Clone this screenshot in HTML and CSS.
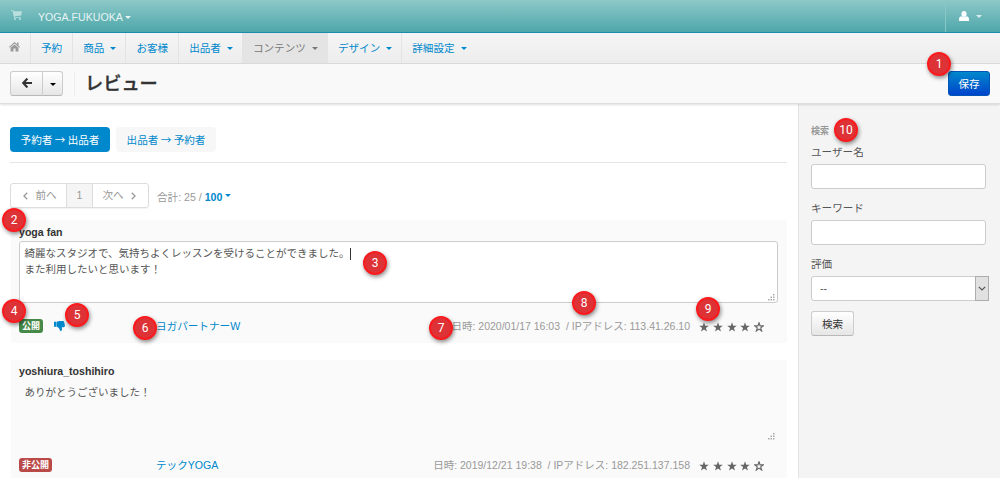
FILE: index.html
```html
<!DOCTYPE html>
<html lang="ja">
<head>
<meta charset="UTF-8" />
<meta name="viewport" content="width=device-width, initial-scale=1" />
<title>レビュー</title>
<link rel="stylesheet" href="styles.css">
</head>
<body>

<div class="topbar">
  <svg class="cart" viewBox="0 0 11 10"><path d="M0 .2h2.200l.4 1H11L10.200 5.600 3.700 6.200l.2.700h6v.9H3L1.600 1.100H0z" fill="currentColor"/><circle cx="4" cy="8.900" r="1" fill="currentColor"/><circle cx="9" cy="8.900" r="1" fill="currentColor"/></svg>
  <a class="store">YOGA.FUKUOKA<i class="caret"></i></a>
  <a class="user">
    <svg viewBox="0 0 10 10" width="10" height="10"><ellipse cx="5" cy="3" rx="2.6" ry="3" fill="#fff"/><path d="M0 10V8c0-1.800 1.200-2.600 2.700-2.700C4 6.600 6 6.600 7.300 5.300 8.800 5.400 10 6.200 10 8v2z" fill="#fff"/></svg>
    <i class="caret"></i>
  </a>
</div>

<div class="nav">
  <a class="home"><svg viewBox="0 0 11 10" width="11" height="10"><path d="M5.500 0 11 5l-.7.8L5.500 1.500.7 5.800 0 5zM8 .6h1.500v3L8 2.200zM5.500 2.400 9.400 5.800V9.500H6.500v-3h-2v3H1.600V5.800z" fill="#999"/></svg></a>
  <a>予約</a>
  <a>商品<i class="caret"></i></a>
  <a>お客様</a>
  <a>出品者<i class="caret"></i></a>
  <a class="active">コンテンツ<i class="caret"></i></a>
  <a>デザイン<i class="caret"></i></a>
  <a>詳細設定<i class="caret"></i></a>
</div>

<div class="header">
  <div class="back">
    <button class="btn"><svg viewBox="0 0 10 10" width="10" height="10"><path d="M5.400.6 1.300 5l4.100 4.400M1.500 5H10" fill="none" stroke="#333" stroke-width="2.200"/></svg></button>
    <button class="btn"><i class="caret"></i></button>
  </div>
  <h1>レビュー</h1>
  <button class="save">保存</button>
</div>

<div class="page">
  <div class="main">
    <div class="tabs">
      <a class="tab on">予約者 → 出品者</a>
      <a class="tab">出品者 → 予約者</a>
    </div>

    <div class="pager">
      <div class="pages">
        <span class="prev"><svg viewBox="0 0 5 8"><path d="M4.200.8 1 4l3.200 3.200"/></svg>前へ</span>
        <span class="current">1</span>
        <span class="next">次へ<svg viewBox="0 0 5 8"><path d="M.8.8 4 4 .8 7.200"/></svg></span>
      </div>
      <div class="total">合計: 25 / <b>100</b><i class="caret"></i></div>
    </div>

    <div class="review">
      <div class="name">yoga fan</div>
      <div class="text editing">綺麗なスタジオで、気持ちよくレッスンを受けることができました。<i class="cursor"></i><br>また利用したいと思います！<svg class="grip" viewBox="0 0 7 7"><path d="M5 0h1.500v1.500H5zM2.500 2.500H4V4H2.500zM5 2.500h1.500V4H5zM0 5h1.500v1.500H0zM2.500 5H4v1.500H2.500zM5 5h1.500v1.500H5z"/></svg></div>
      <div class="foot">
        <div class="status">
          <span class="label green">公開</span>
          <svg class="thumb" viewBox="0 0 11 10"><path d="M0 .8h2.300v5H0zM2.700.8C4.200.6 5 0 6.500 0h2.300c.9 0 1.300.6 1.200 1.200.5.4.6.9.4 1.400.5.500.5 1 .2 1.500.6.900.2 2.100-.8 2.100H7.700c.5 1.300.5 3.800-.9 3.800-1.200 0-.9-1.300-1.500-2.300C4.700 6.800 3.800 5.800 2.700 5.700z"/></svg>
        </div>
        <a class="item">ヨガパートナーW</a>
        <div class="meta">日時: 2020/01/17 16:03 &nbsp;/ IPアドレス: 113.41.26.10</div>
        <div class="stars"></div>
      </div>
    </div>

    <div class="review">
      <div class="name">yoshiura_toshihiro</div>
      <div class="text">ありがとうございました！<svg class="grip" viewBox="0 0 7 7"><path d="M5 0h1.500v1.500H5zM2.500 2.500H4V4H2.500zM5 2.500h1.500V4H5zM0 5h1.500v1.500H0zM2.500 5H4v1.500H2.500zM5 5h1.500v1.500H5z"/></svg></div>
      <div class="foot">
        <div class="status"><span class="label red">非公開</span></div>
        <a class="item">テックYOGA</a>
        <div class="meta">日時: 2019/12/21 19:38 &nbsp;/ IPアドレス: 182.251.137.158</div>
        <div class="stars"></div>
      </div>
    </div>
  </div>

  <div class="sidebar">
    <h6>検索</h6>
    <label>ユーザー名</label>
    <input type="text">
    <label>キーワード</label>
    <input type="text">
    <label>評価</label>
    <div class="select">--<span><svg viewBox="0 0 8 5"><path d="M.8.8 4 4 7.200.8"/></svg></span></div>
    <button class="btn search">検索</button>
  </div>
</div>

<!-- numbered callouts -->
<span class="pin p1">1</span>
<span class="pin p2">2</span>
<span class="pin p3">3</span>
<span class="pin p4">4</span>
<span class="pin p5">5</span>
<span class="pin p6">6</span>
<span class="pin p7">7</span>
<span class="pin p8">8</span>
<span class="pin p9">9</span>
<span class="pin p10">10</span>

<script>
  const star = 'M5 .3 6.200 3.700 9.800 3.800 6.900 6 8 9.500 5 7.400 2 9.500 3.100 6 .2 3.800 3.800 3.700z';
  document.querySelectorAll('.stars').forEach(box => {
    for (let i = 0; i < 5; i++) {
      box.innerHTML += `<svg class="${i < 4 ? 'full' : 'empty'}" viewBox="${i < 4 ? '0 0 10 10' : '-.6 -.6 11.2 11.2'}"><path d="${star}"/></svg>`;
    }
  });
</script>

</body>
</html>
```
FILE: styles.css
```css
* {
  box-sizing: border-box;
}
body {
  margin: 0;
  height: 478px;
  overflow: hidden;
  position: relative;
  background: #fff;
  color: #555;
  font-family: "Liberation Sans", "Noto Sans CJK JP", sans-serif;
  font-size: 10.6px;
  line-height: 16px;
}
a {
  color: #0088cc;
}
button {
  font-family: inherit;
  font-size: inherit;
  padding: 0;
}
.caret {
  display: inline-block;
  border: 3px solid transparent;
  border-top-color: currentColor;
  border-bottom: 0;
  vertical-align: middle;
}
.topbar {
  display: flex;
  align-items: center;
  height: 33px;
  padding-left: 11px;
  background: linear-gradient(#8dc8c8, #4ea7aa);
  border-bottom: 1px solid #1c8ca8;
}
.cart {
  width: 11px;
  height: 10px;
  margin: 0 16px 3px 0;
  color: #b9dfdf;
}
.store {
  color: #e6f4f4;
  padding-top: 2px;
}
.store .caret {
  margin: -2px 0 0 2px;
}
.user {
  display: flex;
  align-items: center;
  gap: 7px;
  width: 55px;
  height: 32px;
  margin-left: auto;
  padding-left: 13px;
  color: #d9efef;
  border-left: 1px solid #8bc6c8;
}
.nav {
  display: flex;
  height: 31px;
  background: linear-gradient(#f5f5f5, #ededed);
  border-bottom: 1px solid #dcdcdc;
}
.nav a {
  padding: 7px 10px 0;
  border-right: 1px solid #e3e3e3;
  white-space: nowrap;
}
.nav a:last-child {
  border: 0;
}
.nav .home {
  width: 31px;
  padding: 7px 0 0 9px;
}
.nav .caret {
  margin: -2px -1px 0 6px;
}
.nav .active {
  background: #e4e4e4;
  color: #777;
}
.header {
  display: flex;
  align-items: center;
  height: 40px;
  padding: 0 10px;
  background: #f9f9f9;
  border-bottom: 1px solid #dedede;
  box-shadow: 0 1px 2px rgba(0, 0, 0, 0.12);
  position: relative;
}
.back {
  display: flex;
  padding-right: 11px;
  margin-right: 10px;
  border-right: 1px solid #eee;
}
.btn {
  height: 25px;
  background: linear-gradient(#fff, #e6e6e6);
  border: 1px solid #ccc;
  border-bottom-color: #b8b8b8;
  border-radius: 3px;
  color: #333;
}
.back .btn {
  width: 33px;
  border-radius: 3px 0 0 3px;
  line-height: 10px;
}
.back .btn + .btn {
  width: 21px;
  margin-left: -1px;
  border-radius: 0 3px 3px 0;
}
.back .caret {
  color: #000;
}
h1 {
  margin: 0;
  font-size: 18.2px;
  font-weight: 500;
  line-height: 30px;
  color: #333;
  -webkit-text-stroke: 0.4px #333;
}
.save {
  width: 42px;
  height: 25px;
  margin-left: auto;
  background: linear-gradient(#0088cc, #0044cc);
  border: 1px solid #0055b5;
  border-radius: 3px;
  color: #fff;
}
.page {
  display: flex;
  height: 374px;
}
.main {
  flex: none;
  width: 798px;
  padding: 23px 11px 0 11px;
}
.tabs {
  display: flex;
  gap: 6px;
  margin-left: -1px;
  padding-bottom: 10px;
  border-bottom: 1px solid #e5e5e5;
}
.tab {
  height: 25px;
  width: 100px;
  line-height: 25px;
  border-radius: 4px;
  background: #f7f7f7;
  font-family: "Noto Sans CJK JP", sans-serif;
  text-align: center;
  white-space: nowrap;
}
.tab.on {
  background: #0088cc;
  color: #fff;
}
.pager {
  display: flex;
  align-items: center;
  margin: 20px 0 0 -1px;
  color: #999;
}
.pages {
  display: flex;
  height: 25px;
  border: 1px solid #ddd;
  border-radius: 3px;
  box-shadow: 0 1px 1px rgba(0, 0, 0, 0.05);
  line-height: 23px;
}
.pages span {
  display: flex;
  align-items: center;
  justify-content: center;
  gap: 7px;
  width: 55px;
}
.pages .prev {
  padding-left: 3px;
}
.pages .next {
  padding-right: 3px;
}
.pages .current {
  width: 27px;
  background: #f5f5f5;
  border: solid #ddd;
  border-width: 0 1px;
}
.pages svg {
  width: 5px;
  height: 8px;
  fill: none;
  stroke: #999;
  stroke-width: 1.3;
}
.total {
  margin-left: 8px;
  padding-top: 2px;
}
.total b,
.total .caret {
  color: #0088cc;
}
.total .caret {
  margin: -4px 0 0 3px;
}
.review {
  height: 123px;
  margin: 12px 0 17px;
  padding: 4px 9px 0 8px;
  background: #fafafa;
}
.review + .review {
  padding-top: 3px;
}
.name {
  height: 17px;
  color: #333;
  font-weight: bold;
  white-space: nowrap;
}
.text {
  position: relative;
  height: 62px;
  padding: 3px 4.5px;
  border: 1px solid transparent;
  border-radius: 3px;
  font-size: 10.5px;
}
.text.editing {
  background: #fff;
  border-color: #ccc;
}
.cursor {
  display: inline-block;
  height: 12px;
  border-left: 1px solid #333;
  vertical-align: middle;
}
.grip {
  position: absolute;
  right: 2px;
  bottom: 1px;
  width: 7px;
  height: 7px;
  fill: #aaa;
}
.foot {
  display: flex;
  height: 16px;
  margin-top: 15px;
}
.status {
  display: flex;
  align-items: center;
  gap: 11px;
  width: 137px;
}
.label {
  height: 14px;
  padding: 0 3px;
  border-radius: 3px;
  color: #fff;
  font-size: 9px;
  font-weight: bold;
  line-height: 14px;
}
.green {
  background: #468847;
}
.red {
  background: #b94a48;
}
.thumb {
  width: 11px;
  height: 10px;
  fill: #0088cc;
}
.meta {
  margin-left: auto;
  color: #999;
  font-size: 10.5px;
  white-space: nowrap;
}
.stars {
  display: flex;
  gap: 3.8px;
  width: 88px;
  padding: 4px 0 0 9px;
}
.stars svg {
  width: 10px;
  height: 10px;
  fill: #666;
}
.stars .empty {
  fill: none;
  stroke: #666;
  stroke-width: 1.3;
}
.sidebar {
  flex: 1;
  padding: 19px 0 0 12px;
  background: #f4f4f4;
  border-left: 1px solid #e3e3e3;
}
h6 {
  margin: 0 0 2px;
  font-size: 9px;
  font-weight: bold;
  color: #999;
}
.sidebar label {
  display: block;
  height: 23px;
  padding-top: 3px;
}
.sidebar input {
  display: block;
  width: 175px;
  height: 25px;
  margin-bottom: 8px;
  border: 1px solid #ccc;
  border-radius: 3px;
  background: #fff;
}
.select {
  display: flex;
  justify-content: space-between;
  width: 178px;
  height: 25px;
  padding-left: 8px;
  border: 1px solid #ccc;
  border-radius: 3px;
  background: #fff;
  line-height: 23px;
}
.select span {
  display: flex;
  align-items: center;
  justify-content: center;
  width: 14px;
  height: 25px;
  margin: -1px -1px 0 0;
  background: #e1e1e1;
  border: 1px solid #adadad;
}
.select svg {
  width: 8px;
  height: 5px;
  fill: none;
  stroke: #555;
  stroke-width: 1.2;
}
.search {
  width: 43px;
  margin-top: 10px;
}
.pin {
  position: absolute;
  width: 24px;
  height: 24px;
  border: 2px solid #fb1a1e;
  border-radius: 50%;
  background: #dd3236;
  box-shadow: 1px 2px 4px rgba(0, 0, 0, 0.45);
  color: #fff;
  font-family: Roboto, sans-serif;
  font-size: 12px;
  line-height: 20px;
  text-align: center;
}
.p1 { left: 927px; top: 52px; }
.p2 { left: 2px; top: 208px; }
.p3 { left: 363px; top: 251px; }
.p4 { left: 2px; top: 299px; }
.p5 { left: 65px; top: 303px; }
.p6 { left: 133px; top: 316px; }
.p7 { left: 429px; top: 316px; }
.p8 { left: 572px; top: 291px; }
.p9 { left: 696px; top: 297px; }
.p10 { left: 834px; top: 118px; }
```
